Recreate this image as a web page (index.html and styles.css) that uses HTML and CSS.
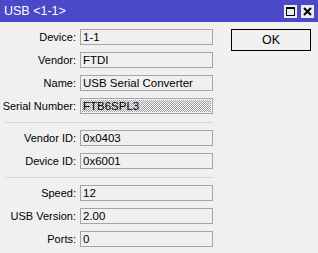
FILE: index.html
```html
<!DOCTYPE html>
<html lang="en">
<head>
    <meta charset="UTF-8">
    <title>USB &lt;1-1&gt;</title>
    <link rel="stylesheet" href="styles.css">
</head>
<body>
    <div class="window">
        <div class="titlebar">
            <span class="title">USB &lt;1-1&gt;</span>
            <div class="controls">
                <span class="ctl">
                    <svg width="9" height="9" viewBox="0 0 9 9"><rect x="0.5" y="0.5" width="8" height="8" fill="none" stroke="#000"/><line x1="0" y1="1.5" x2="9" y2="1.5" stroke="#000"/></svg>
                </span>
                <span class="ctl">
                    <svg width="9" height="9" viewBox="0 0 9 9"><path d="M1 1 L8 8 M8 1 L1 8" stroke="#000" stroke-width="2"/></svg>
                </span>
            </div>
        </div>
        <div class="content">
            <div class="form">
                <label>Device:</label><div class="field">1-1</div>
                <label>Vendor:</label><div class="field">FTDI</div>
                <label>Name:</label><div class="field">USB Serial Converter</div>
                <label>Serial Number:</label><div class="field selected"><span>FTB6SPL3</span></div>
                <hr class="sep">
                <label>Vendor ID:</label><div class="field">0x0403</div>
                <label>Device ID:</label><div class="field">0x6001</div>
                <hr class="sep">
                <label>Speed:</label><div class="field">12</div>
                <label>USB Version:</label><div class="field">2.00</div>
                <label>Ports:</label><div class="field">0</div>
            </div>
            <div class="side">
                <button class="ok">OK</button>
            </div>
        </div>
    </div>
</body>
</html>
```

FILE: styles.css
```css
body {
    margin: 0;
    background-color: #f0f0f0;
    font-family: "Liberation Sans", Arial, sans-serif;
    font-size: 11.5px;
    color: #000;
}

.window {
    width: 318px;
    height: 253px;
    background-color: #f0f0f0;
}

.titlebar {
    height: 22px;
    background-color: #4a4ac8;
    display: flex;
    align-items: center;
    justify-content: space-between;
    padding: 0 4px 0 4px;
    box-sizing: border-box;
}

.title {
    color: #fff;
    font-size: 12.5px;
}

.controls {
    display: flex;
    gap: 4px;
    margin-top: 1px;
}

.ctl {
    width: 13px;
    height: 13px;
    background-color: #ececec;
    display: flex;
    align-items: center;
    justify-content: center;
}

.content {
    display: flex;
    align-items: flex-start;
    padding-top: 7px;
}

.form {
    display: grid;
    grid-template-columns: 76px 133px;
    column-gap: 4px;
    row-gap: 7px;
}

.form label {
    text-align: right;
    line-height: 16px;
    white-space: nowrap;
    font-size: 11px;
}

.field {
    height: 16px;
    box-sizing: border-box;
    border: 1px solid #a5a5a5;
    padding: 0 2px;
    line-height: 14px;
}

.field.selected {
    padding: 1px;
}

.field.selected span {
    display: block;
    height: 12px;
    line-height: 12px;
    padding-left: 1px;
    background: repeating-conic-gradient(#9a9a9a 0 25%, #ffffff 0 50%) 0 0 / 2px 2px;
}

.sep {
    grid-column: 1 / -1;
    margin: 1px 0 0 5px;
    border: 0;
    border-top: 1px solid #d5d5d5;
    height: 0;
}

.side {
    margin-left: 18px;
}

.ok {
    width: 80px;
    height: 22px;
    border: 1px solid #000;
    background-color: #f0f0f0;
    font-family: "Liberation Sans", Arial, sans-serif;
    font-size: 12.5px;
    padding: 0;
}
```
